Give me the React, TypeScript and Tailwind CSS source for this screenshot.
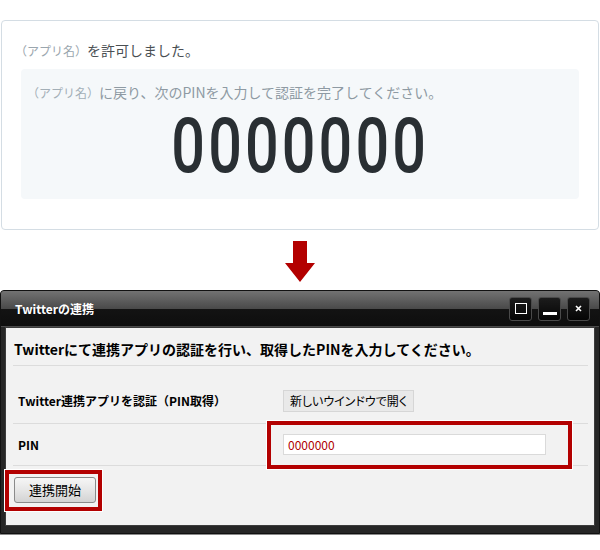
import type { ReactNode } from "react"

function TitleButton({ children }: { children: ReactNode }) {
  return (
    <div className="flex h-6 w-[23px] items-center justify-center rounded-[3px] border border-[#4a4a4a] bg-[linear-gradient(#1c1c1c,#050505)]">
      {children}
    </div>
  )
}

export default function App() {
  return (
    <div className="h-[550px] w-[600px] bg-white pt-5 font-['Noto_Sans_CJK_JP',sans-serif]">
      {/* Twitter側のPIN表示 */}
      <div className="mx-px h-[210px] rounded-[4px] border border-[#d4dde4] px-[19px] pt-[19px]">
        <p className="-ml-1.5 h-5 text-[14px] leading-5 text-[#4a4f53]">
          <span className="text-[12px] text-[#9aa6ae]">（アプリ名）</span>を許可しました。
        </p>
        <div className="mt-[9px] h-[130px] rounded-[4px] bg-[#f5f8fa] px-[6px] pt-[13px]">
          <p className="h-5 text-[14px] leading-5 text-[#8e9aa3]">
            <span className="text-[12px] text-[#a3afb7]">（アプリ名）</span>に戻り、次のPINを入力して認証を完了してください。
          </p>
          <div className="mt-[7px] flex h-[75px] justify-center">
            <span className="inline-block scale-x-[0.78] font-['Roboto',sans-serif] text-[76px] leading-[75px] font-medium tracking-[4px] text-[#292f33]">
              0000000
            </span>
          </div>
        </div>
      </div>

      {/* 矢印 */}
      <div className="flex h-[60px] justify-center pt-[11px]">
        <svg width="30" height="41" viewBox="0 0 30 41">
          <polygon points="8,0 22,0 22,22 30,22 15,41 0,22 8,22" fill="#b30000" />
        </svg>
      </div>

      {/* アプリ側のウインドウ */}
      <div className="relative h-[244px] rounded-t-[4px] border border-[#111] bg-[#262626] shadow-[0_1px_0_#8a8a8a]">
        <div className="flex h-[36px] items-center justify-between rounded-t-[3px] border-b border-[#4a4a4a] bg-[linear-gradient(#727272,#4a4a4a_50%,#131313_52%,#0e0e0e)] pl-[14px] pr-[9px]">
          <span className="text-[12px] font-bold text-white">Twitterの連携</span>
          <div className="flex gap-[6px]">
            <TitleButton>
              <div className="h-[11px] w-[12px] border-[1.5px] border-white" />
            </TitleButton>
            <TitleButton>
              <div className="mt-[9px] h-[3px] w-[14px] bg-white" />
            </TitleButton>
            <TitleButton>
              <svg width="7" height="7" viewBox="0 0 7 7">
                <path d="M1 1 L6 6 M6 1 L1 6" stroke="#fff" strokeWidth="1.6" />
              </svg>
            </TitleButton>
          </div>
        </div>

        <div className="mx-[4px] h-[199px] border border-[#3c3c3c] bg-[#f2f2f2] pl-[7px] pr-[6px] pt-[11px] text-black">
          <h2 className="h-[27px] border-b border-[#dcdcdc] pl-px text-[14px] leading-5 font-bold">
            Twitterにて連携アプリの認証を行い、取得したPINを入力してください。
          </h2>

          <div className="mt-[14px]">
            <div className="flex h-[44px] items-center border-b border-[#dcdcdc] pb-px">
              <div className="w-[270px] pl-[5px] text-[12px] font-bold">Twitter連携アプリを認証（PIN取得）</div>
              <button className="h-[22px] w-[131px] border border-[#d6d6d6] bg-[#e9e9e9] text-[12px] [font-feature-settings:'palt']">
                新しいウインドウで開く
              </button>
            </div>
            <div className="flex h-[42px] items-center border-b border-[#dcdcdc]">
              <div className="w-[270px] pl-[5px] text-[12px] font-bold">PIN</div>
              <div className="flex h-[21px] w-[263px] items-center border border-[#dadada] bg-white pl-[4px] text-[12px] text-[#b00000]">
                0000000
              </div>
            </div>
          </div>

          <button className="ml-px mt-[11px] h-[26px] w-[82px] rounded-[3px] border border-[#8a8a8a] bg-[linear-gradient(#f6f6f6,#e6e6e6_50%,#d3d3d3)] text-[13px]">
            連携開始
          </button>
        </div>

        {/* 赤枠の注記 */}
        <div className="absolute left-[266px] top-[130px] h-[48px] w-[305px] border-4 border-[#b30000] shadow-[0_0_0_1px_#fff]" />
        <div className="absolute left-[4px] top-[179px] h-[41px] w-[97px] border-4 border-[#b30000] shadow-[0_0_0_1px_#fff]" />
      </div>
    </div>
  )
}
